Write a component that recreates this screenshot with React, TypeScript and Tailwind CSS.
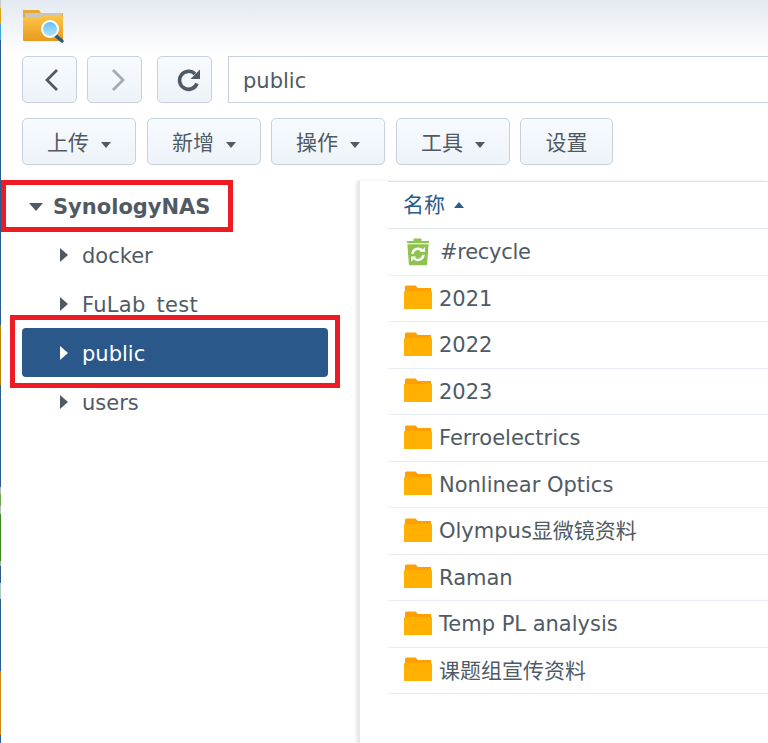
import React from "react";

const fontClass = "font-['DejaVu_Sans','Noto_Sans_CJK_SC',sans-serif]";

const stripe = [
  { h: "h-[8px]", c: "bg-[#c9c9c9]" },
  { h: "h-[16px]", c: "bg-[#d9a514]" },
  { h: "h-[16px]", c: "bg-[#3fa7d6]" },
  { h: "h-[285px]", c: "bg-[#2a5c93]" },
  { h: "h-[60px]", c: "bg-[#b8860b]" },
  { h: "h-[102px]", c: "bg-[#2a5c93]" },
  { h: "h-[7px]", c: "bg-[#b5b5b5]" },
  { h: "h-[12px]", c: "bg-[#6fa84a]" },
  { h: "h-[8px]", c: "bg-[#bdbdbd]" },
  { h: "h-[47px]", c: "bg-[#3d8a1e]" },
  { h: "h-[5px]", c: "bg-[#a9a9a9]" },
  { h: "h-[17px]", c: "bg-[#2a5c93]" },
  { h: "h-[16px]", c: "bg-[#a9c9c6]" },
  { h: "h-[72px]", c: "bg-[#2a5c93]" },
  { h: "h-[64px]", c: "bg-[#c98a10]" },
  { h: "h-[8px]", c: "bg-[#2a5c93]" },
];

const AppIcon = () => (
  <svg width="44" height="36" viewBox="0 0 44 36">
    <defs>
      <linearGradient id="fold" x1="0" y1="0" x2="0" y2="1">
        <stop offset="0" stopColor="#fcc44a" />
        <stop offset="1" stopColor="#e79a1c" />
      </linearGradient>
      <linearGradient id="lens" x1="0" y1="0" x2="0" y2="1">
        <stop offset="0" stopColor="#5cc0f5" />
        <stop offset="1" stopColor="#b9e6fb" />
      </linearGradient>
    </defs>
    <path d="M1 2h16l2 3h22v6H1z" fill="#e2a93a" />
    <rect x="3" y="5" width="37" height="8" fill="#c9c6bd" />
    <path d="M1 9h17l2-1h21v24a1 1 0 0 1-1 1H2a1 1 0 0 1-1-1z" fill="url(#fold)" />
    <path d="M33 27l7 6" stroke="#1f5f85" strokeWidth="3.5" strokeLinecap="round" />
    <circle cx="28" cy="21" r="8" fill="url(#lens)" stroke="#fff" strokeWidth="2" />
  </svg>
);

const Folder = () => (
  <svg width="28" height="24" viewBox="0 0 28 24" className="mb-[2px]">
    <path d="M1 2a1.5 1.5 0 0 1 1.5-1.5h9L14 3h13v5H1z" fill="#ff9f00" />
    <rect x="0" y="6" width="28" height="18" rx="0.5" fill="#ffb000" />
  </svg>
);

const Recycle = () => (
  <svg width="24" height="28" viewBox="0 0 26 30">
    <rect x="8" y="0.5" width="9" height="2.5" rx="1" fill="#8fc24f" />
    <rect x="1" y="3" width="24" height="2.5" rx="1" fill="#8fc24f" />
    <path d="M1.5 6.5h23l-1.6 21.5a1.5 1.5 0 0 1-1.5 1.4H4.6a1.5 1.5 0 0 1-1.5-1.4z" fill="#8fc24f" />
    <path d="M7 17a6 6 0 0 1 10.5-3.5" stroke="#fff" strokeWidth="2.6" fill="none" />
    <path d="M15 15h5.5v-5.5z" fill="#fff" />
    <path d="M19 18a6 6 0 0 1-10.5 3.5" stroke="#fff" strokeWidth="2.6" fill="none" />
    <path d="M11 20H5.5v5.5z" fill="#fff" />
  </svg>
);

const Caret = () => <span className="mt-[6px] w-0 h-0 border-x-[5px] border-x-transparent border-t-[6px] border-t-[#505a64]" />;

const TreeArrow = ({ light }: { light?: boolean }) => (
  <span
    className={`w-0 h-0 border-y-[7px] border-y-transparent border-l-[8px] ${light ? "border-l-white" : "border-l-[#505a64]"}`}
  />
);

const btnClass =
  "h-[47px] rounded-[5px] border border-[#c6d0de] bg-gradient-to-b from-[#f7fbff] to-[#eef3f9] flex items-center justify-center text-[21px] text-[#505a64]";

const actions = [
  { label: "上传", w: "w-[114px]", menu: true },
  { label: "新增", w: "w-[114px] ml-[11px]", menu: true },
  { label: "操作", w: "w-[114px] ml-[10px]", menu: true },
  { label: "工具", w: "w-[114px] ml-[11px]", menu: true },
  { label: "设置", w: "w-[93px] ml-[10px]", menu: false },
];

const treeItems = ["docker", "FuLab_test", "public", "users"];

const files = ["2021", "2022", "2023", "Ferroelectrics", "Nonlinear Optics", "Olympus显微镜资料", "Raman", "Temp PL analysis", "课题组宣传资料"];

export default function App() {
  return (
    <div className={`relative w-[768px] h-[743px] overflow-hidden bg-white ${fontClass}`}>
      {/* desktop peeking through on the left */}
      <div className="absolute left-0 top-0 w-[1px] h-full flex flex-col z-10">
        {stripe.map((s, i) => (
          <div key={i} className={`${s.h} ${s.c}`} />
        ))}
      </div>

      <div className="h-[56px] bg-gradient-to-b from-[#e4e9f1] to-white pl-[22px] pt-[8px]">
        <AppIcon />
      </div>

      <div className="flex pl-[22px]">
        <div className={`${btnClass} w-[55px]`}>
          <svg width="18" height="24" viewBox="0 0 18 24" fill="none" stroke="#505a64" strokeWidth="2.8" className="ml-[4px]">
            <path d="M14 2L4 12l10 10" />
          </svg>
        </div>
        <div className={`${btnClass} w-[55px] ml-[10px]`}>
          <svg width="18" height="24" viewBox="0 0 18 24" fill="none" stroke="#a3aab3" strokeWidth="2.8" className="ml-[7px]">
            <path d="M4 2l10 10L4 22" />
          </svg>
        </div>
        <div className={`${btnClass} w-[55px] ml-[15px]`}>
          <svg width="24" height="24" viewBox="0 0 24 24" fill="none" className="ml-[8px]">
            <path d="M20 15.5A9 9 0 1 1 18 6" stroke="#505a64" strokeWidth="3.6" />
            <path d="M23 1.5V11h-9.5z" fill="#505a64" />
          </svg>
        </div>
        <div className="flex-1 ml-[16px] h-[47px] border border-r-0 border-[#c6d0de] bg-white pl-[14px] flex items-center text-[21px] text-[#505a64]">
          <span className="pt-[4px]">public</span>
        </div>
      </div>

      <div className="flex pl-[22px] mt-[15px]">
        {actions.map((a) => (
          <div key={a.label} className={`${btnClass} gap-[12px] ${a.w}`}>
            <span className="pt-[4px]">{a.label}</span>
            {a.menu && <Caret />}
          </div>
        ))}
      </div>

      <div className="flex mt-[16px]">
        <div className="w-[358px] shrink-0 pl-[22px] pr-[30px]">
          <div className="h-[49px] flex items-center pl-[7px] gap-[10px] text-[21px] font-bold text-[#505a64]">
            <span className="mt-[2px] w-0 h-0 border-x-[7px] border-x-transparent border-t-[8px] border-t-[#505a64]" />
            <span className="pt-[4px]">SynologyNAS</span>
          </div>
          {treeItems.map((t) => {
            const active = t === "public";
            return (
              <div
                key={t}
                className={`h-[49px] flex items-center pl-[38px] gap-[14px] text-[21px] rounded-[4px] ${
                  active ? "bg-[#2b588b] text-white" : "text-[#505a64]"
                }`}
              >
                <TreeArrow light={active} />
                <span className={t === "FuLab_test" ? "pt-[4px] tracking-[0.3px]" : "pt-[4px]"}>{t}</span>
              </div>
            );
          })}
        </div>

        <div className="flex-1 h-[562px] border-l-2 border-[#e6e8eb] pl-[28px] shadow-[-2px_0_3px_#e8e8e8]">
          <div className="h-[48px] border-y border-[#dde4ec] flex items-center pl-[15px] gap-[9px] text-[21px] text-[#2b5a8c]">
            <span className="pt-[2px]">名称</span>
            <span className="w-0 h-0 border-x-[5px] border-x-transparent border-b-[6px] border-b-[#2b5a8c]" />
          </div>
          <div className="h-[46.5px] border-b border-[#e9eef4] flex items-center pl-[18px] gap-[10px] text-[21px] text-[#505a64]">
            <Recycle />
            <span className="pt-[2px] tracking-[-0.3px]">#recycle</span>
          </div>
          {files.map((f) => (
            <div key={f} className="h-[46.5px] border-b border-[#e9eef4] flex items-center pl-[16px] gap-[7px] text-[21px] text-[#505a64]">
              <Folder />
              <span className="pt-[2px]">{f}</span>
            </div>
          ))}
        </div>
      </div>

      {/* red annotation boxes */}
      <div className="absolute left-[1px] top-[180px] w-[232px] h-[52px] border-[5px] border-[#ed1c24]" />
      <div className="absolute left-[10px] top-[315px] w-[330px] h-[73px] border-[5px] border-[#ed1c24]" />
    </div>
  );
}
